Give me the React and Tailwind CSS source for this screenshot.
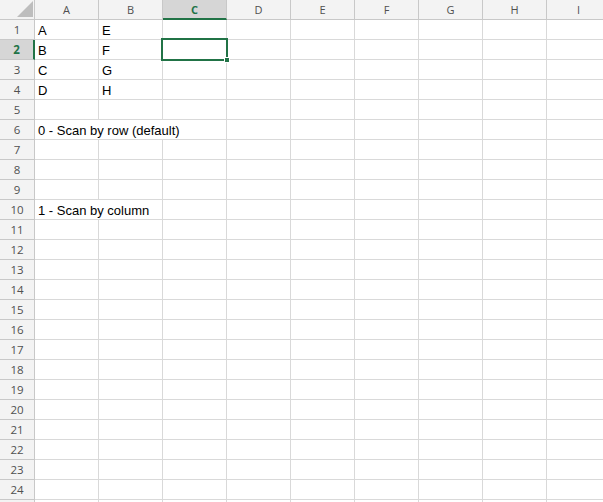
import React from "react";

// Simple Excel-like sheet: 35px row header + 64px columns, 20px rows
const COLS = ["A", "B", "C", "D", "E", "F", "G", "H", "I"];
const ROWS = Array.from({ length: 25 }, (_, i) => i + 1);

const DATA = {
  1: { 0: "A", 1: "E" },
  2: { 0: "B", 1: "F" },
  3: { 0: "C", 1: "G" },
  4: { 0: "D", 1: "H" },
  6: { 0: { text: "0 - Scan by row (default)", span: 3 } },
  10: { 0: { text: "1 - Scan by column", span: 2 } },
};

const SEL_COL = 2;
const SEL_ROW = 2;
const headFont = { fontFamily: '"Open Sans", "Liberation Sans", sans-serif' };

function HeaderRow() {
  return (
    <>
      <div className="relative bg-[#f3f3f3] border-r border-b border-[#c8c8c8]">
        <svg className="absolute right-[1px] bottom-[2px]" width="16" height="16" viewBox="0 0 16 16">
          <polygon points="16,0 16,16 0,16" fill="#bdbdbd" />
        </svg>
      </div>
      {COLS.map((c, i) => (
        <div
          key={c}
          style={headFont}
          className={
            "flex justify-center leading-[19px] text-[11px] border-r " +
            (i === SEL_COL
              ? "bg-[#d6d6d6] text-[#217346] font-bold border-[#c8c8c8] border-b-2 border-b-[#217346]"
              : "bg-[#f3f3f3] text-[#505050] border-b border-[#c8c8c8]")
          }
        >
          {c}
        </div>
      ))}
    </>
  );
}

function SheetRow({ n }) {
  const cells = DATA[n] || {};
  const out = [];
  let i = 0;
  while (i < COLS.length) {
    const v = cells[i];
    const text = typeof v === "string" ? v : v?.text;
    const span = v?.span || 1;
    out.push(
      <div
        key={i}
        className={
          "flex items-end pl-[3px] pb-[1px] whitespace-nowrap text-[13px] leading-[15px] text-black border-r border-b border-[#d9d9d9] " +
          (span === 3 ? "col-span-3" : span === 2 ? "col-span-2" : "")
        }
      >
        {text}
      </div>
    );
    i += span;
  }
  return (
    <>
      <div
        style={headFont}
        className={
          "flex justify-center pt-[1px] leading-[18px] text-[11.5px] border-b border-[#c8c8c8] " +
          (n === SEL_ROW
            ? "bg-[#d6d6d6] text-[#217346] font-bold border-r-2 border-r-[#217346]"
            : "bg-[#f3f3f3] text-[#505050] border-r")
        }
      >
        {n < 25 ? n : ""}
      </div>
      {out}
    </>
  );
}

export default function App() {
  return (
    <div
      className="relative w-[603px] h-[502px] overflow-hidden bg-white"
      style={{ fontFamily: '"Liberation Sans", Arial, sans-serif' }}
    >
      <div className="grid grid-cols-[35px_repeat(9,64px)] auto-rows-[20px]">
        <HeaderRow />
        {ROWS.map((n) => (
          <SheetRow key={n} n={n} />
        ))}
      </div>

      {/* active cell frame and fill handle */}
      <div className="absolute left-[161px] top-[38px] w-[67px] h-[23px] border-2 border-[#217346]" />
      <div className="absolute left-[224px] top-[57px] w-[6px] h-[6px] bg-[#217346] border border-white" />
    </div>
  );
}
